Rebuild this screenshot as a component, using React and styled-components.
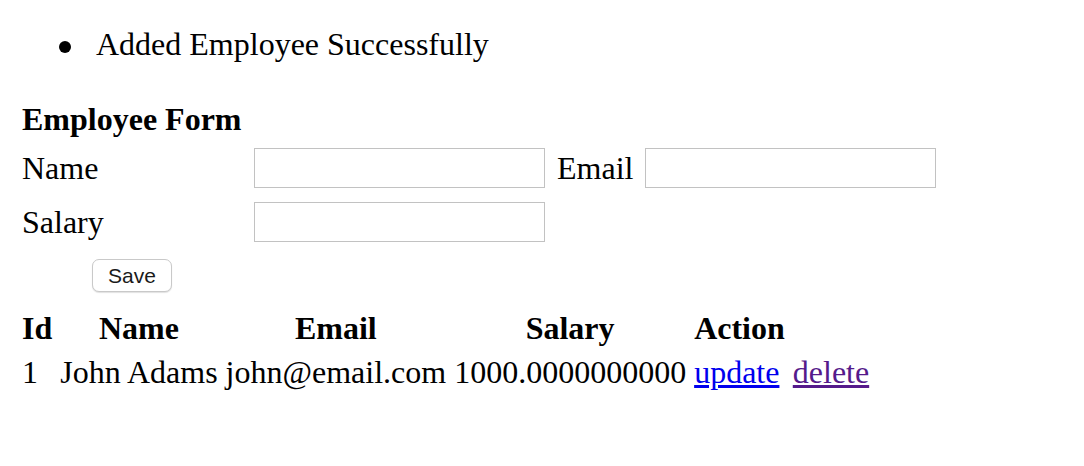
import React from "react";
import styled, { createGlobalStyle } from "styled-components";

const GlobalStyle = createGlobalStyle`
  html, body {
    margin: 0;
    background: #fff;
    color: #000;
    font-family: "Liberation Serif", "Times New Roman", serif;
  }
`;

const Page = styled.div`
  padding: 0 16px;
  font-size: 32px;
  line-height: 36px;
`;

const MessageList = styled.ul`
  margin: 0;
  padding: 26px 0 0 80px;
  list-style: none;
`;

const Message = styled.li`
  position: relative;

  &::before {
    content: "";
    position: absolute;
    left: -37px;
    top: 15px;
    width: 12px;
    height: 12px;
    border-radius: 50%;
    background: #000;
  }
`;

const Form = styled.form`
  margin-top: 39px;
  padding-left: 6px;
  display: flex;
  flex-direction: column;
`;

const FormTitle = styled.div`
  font-weight: bold;
  margin-bottom: 11px;
`;

const FieldRow = styled.div`
  display: grid;
  grid-template-columns: 232px 291px max-content 291px;
  justify-content: start;
  align-items: center;
  margin-bottom: 14px;
`;

const Label = styled.label`
  padding: ${(p) => (p.$inline ? "0 12px" : "0")};
`;

const Input = styled.input`
  box-sizing: border-box;
  width: 291px;
  height: 40px;
  margin: 0;
  border: 1px solid #c2c2c2;
  background: #fff;
  font-size: 20px;
`;

const ButtonRow = styled.div`
  display: flex;
  padding: 3px 0 0 70px;
`;

const SaveButton = styled.button`
  box-sizing: border-box;
  width: 80px;
  height: 33px;
  margin: 0;
  padding: 0;
  border: 1px solid #c9c9c9;
  border-radius: 7px;
  background: #fff;
  box-shadow: 0 1px 1px rgba(0, 0, 0, 0.12);
  font-family: "Liberation Sans", Arial, sans-serif;
  font-size: 21px;
  line-height: 1;
  color: #1a1a1a;
`;

const Table = styled.table`
  margin-top: 12px;
  border-spacing: 4px;
  font-size: 32px;
  line-height: 36px;
`;

const Th = styled.th`
  padding: 2px;
  text-align: center;
`;

const Td = styled.td`
  padding: 2px;
  white-space: nowrap;
`;

const ActionLink = styled.a`
  color: ${(p) => (p.$visited ? "#551a8b" : "#0000ee")};
  text-decoration: underline;
  cursor: pointer;
`;

const employees = [
  { id: 1, name: "John Adams", email: "john@email.com", salary: "1000.0000000000" },
];

export default function App() {
  return (
    <>
      <GlobalStyle />
      <Page>
        <MessageList>
          <Message>Added Employee Successfully</Message>
        </MessageList>

        <Form onSubmit={(e) => e.preventDefault()}>
          <FormTitle>Employee Form</FormTitle>
          <FieldRow>
            <Label>Name</Label>
            <Input type="text" />
            <Label $inline>Email</Label>
            <Input type="text" />
          </FieldRow>
          <FieldRow>
            <Label>Salary</Label>
            <Input type="text" />
          </FieldRow>
          <ButtonRow>
            <SaveButton type="submit">Save</SaveButton>
          </ButtonRow>
        </Form>

        <Table>
          <thead>
            <tr>
              <Th>Id</Th>
              <Th>Name</Th>
              <Th>Email</Th>
              <Th>Salary</Th>
              <Th>Action</Th>
            </tr>
          </thead>
          <tbody>
            {employees.map((emp) => (
              <tr key={emp.id}>
                <Td>{emp.id}</Td>
                <Td>{emp.name}</Td>
                <Td>{emp.email}</Td>
                <Td>{emp.salary}</Td>
                <Td>
                  <ActionLink>update</ActionLink>
                </Td>
                <Td>
                  <ActionLink $visited>delete</ActionLink>
                </Td>
              </tr>
            ))}
          </tbody>
        </Table>
      </Page>
    </>
  );
}
